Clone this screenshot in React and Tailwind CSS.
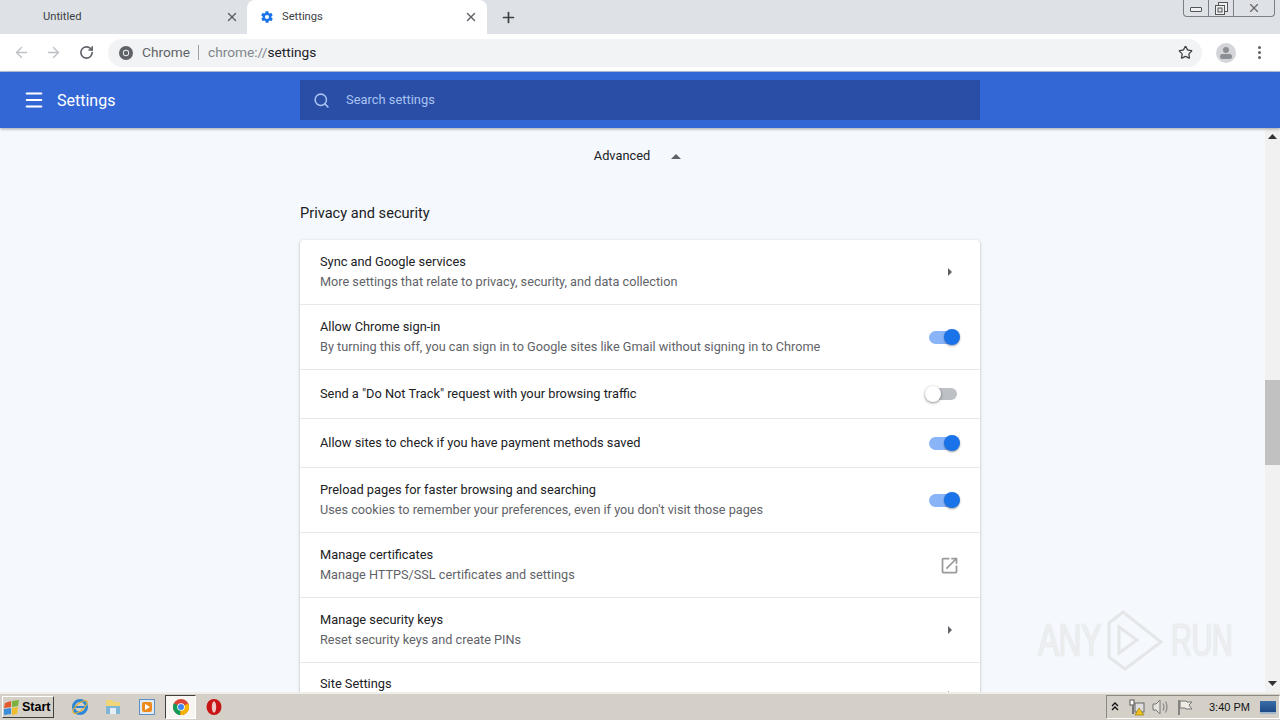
import { ArrowLeft, ArrowRight, RotateCw, Star, Menu, Search, X, Plus } from 'lucide-react';

const rows = [
  { title: 'Sync and Google services', sub: 'More settings that relate to privacy, security, and data collection', end: 'arrow', height: 'h-[64px]' },
  { title: 'Allow Chrome sign-in', sub: 'By turning this off, you can sign in to Google sites like Gmail without signing in to Chrome', end: 'on', height: 'h-[65px]' },
  { title: 'Send a "Do Not Track" request with your browsing traffic', end: 'off', height: 'h-[49px]' },
  { title: 'Allow sites to check if you have payment methods saved', end: 'on', height: 'h-[49px]' },
  { title: 'Preload pages for faster browsing and searching', sub: "Uses cookies to remember your preferences, even if you don't visit those pages", end: 'on', height: 'h-[65px]' },
  { title: 'Manage certificates', sub: 'Manage HTTPS/SSL certificates and settings', end: 'link', height: 'h-[65px]' },
  { title: 'Manage security keys', sub: 'Reset security keys and create PINs', end: 'arrow', height: 'h-[65px]' },
  { title: 'Site Settings', end: 'arrow', height: 'h-[65px]', clipped: true },
];

function Toggle({ on }) {
  if (on) {
    return (
      <div className="relative w-[31px] h-[16px] -mt-px">
        <div className="absolute left-0 top-[2px] w-[29px] h-[13px] rounded-full bg-[#8ab4f8]" />
        <div className="absolute right-0 top-0 w-[16px] h-[16px] rounded-full bg-[#1a73e8] shadow-[0_1px_2px_rgba(0,0,0,0.4)]" />
      </div>
    );
  }
  return (
    <div className="relative w-[32px] h-[16px] mr-[3px]">
      <div className="absolute right-0 top-[2px] w-[30px] h-[12px] rounded-full bg-[#bdc1c6]" />
      <div className="absolute left-0 top-0 w-[16px] h-[16px] rounded-full bg-white shadow-[0_1px_3px_rgba(0,0,0,0.45)]" />
    </div>
  );
}

function RowEnd({ kind }) {
  if (kind === 'arrow') {
    return (
      <svg width="6" height="10" viewBox="0 0 6 10" className="mr-[7px]">
        <path d="M1 1l4 4-4 4z" fill="#5f6368" />
      </svg>
    );
  }
  if (kind === 'link') {
    return (
      <svg width="21" height="21" viewBox="0 0 24 24" fill="#9a9a9a">
        <path d="M19 19H5V5h7V3H5a2 2 0 0 0-2 2v14a2 2 0 0 0 2 2h14c1.1 0 2-.9 2-2v-7h-2v7zM14 3v2h3.59l-9.83 9.83 1.41 1.41L19 6.41V10h2V3h-7z" />
      </svg>
    );
  }
  return <Toggle on={kind === 'on'} />;
}

function Row({ row, first }) {
  return (
    <div className={`${row.height} ${first ? '' : 'border-t border-[#e8e8e8]'} flex items-center justify-between px-[20px] shrink-0`}>
      <div className={`flex flex-col gap-[4px] leading-[16px] ${row.clipped ? 'self-start mt-[13px]' : ''}`}>
        <div className="text-[12.8px] text-[#202124]">{row.title}</div>
        {row.sub && <div className="text-[12.7px] text-[#5f6368]">{row.sub}</div>}
      </div>
      <RowEnd kind={row.end} />
    </div>
  );
}

function ChromeLogo({ size = 14 }) {
  return (
    <svg width={size} height={size} viewBox="0 0 16 16">
      <circle cx="8" cy="8" r="8" fill="#5f6368" />
      <circle cx="8" cy="8" r="3.6" fill="#f1f3f4" />
      <circle cx="8" cy="8" r="2.6" fill="#5f6368" />
    </svg>
  );
}

function TaskbarIcons() {
  return (
    <div className="flex items-center">
      {/* IE */}
      <svg width="18" height="18" viewBox="0 0 18 18" className="ml-[17px]">
        <circle cx="9" cy="9" r="6.5" fill="none" stroke="#2a86d8" strokeWidth="3" />
        <rect x="3" y="8" width="12" height="2" fill="#2a86d8" />
        <ellipse cx="9" cy="9" rx="9" ry="3.5" fill="none" stroke="#e0b030" strokeWidth="1.2" transform="rotate(-40 9 9)" />
      </svg>
      {/* Explorer */}
      <svg width="18" height="18" viewBox="0 0 18 18" className="ml-[15px]">
        <path d="M2 2h6l2 2h6v12H2z" fill="#f1d679" />
        <rect x="2" y="8" width="14" height="8" fill="#7fb5d6" />
        <rect x="6" y="10" width="6" height="6" fill="#e4eef5" />
      </svg>
      {/* Media player */}
      <svg width="16" height="16" viewBox="0 0 16 16" className="ml-[17px]">
        <rect x="0.5" y="0.5" width="15" height="15" fill="#dfeaf5" stroke="#5d8fc0" />
        <rect x="3" y="3" width="10" height="10" rx="2" fill="#ec8a1c" />
        <path d="M6 5l5 3-5 3z" fill="#fff" />
      </svg>
      {/* Chrome, active */}
      <div className="ml-[10px] w-[31px] h-[24px] bg-[#f7f6f3] border border-t-[#404040] border-l-[#404040] border-b-white border-r-white flex items-center justify-center">
        <svg width="16" height="16" viewBox="0 0 16 16">
          <circle cx="8" cy="8" r="8" fill="#db4437" />
          <path d="M8 8L1 4.2A8 8 0 0 0 7.2 16z" fill="#0f9d58" />
          <path d="M8 8l-.8 8A8 8 0 0 0 15.2 4.6z" fill="#f4b400" />
          <circle cx="8" cy="8" r="3.8" fill="#fff" />
          <circle cx="8" cy="8" r="3" fill="#4285f4" />
        </svg>
      </div>
      {/* Opera */}
      <svg width="16" height="18" viewBox="0 0 16 18" className="ml-[10px]">
        <ellipse cx="8" cy="9" rx="7.5" ry="8" fill="#c81414" />
        <ellipse cx="8" cy="9" rx="2.2" ry="5.8" fill="#ecc8c8" />
      </svg>
    </div>
  );
}

function TrayIcons() {
  return (
    <div className="flex items-center">
      <svg width="8" height="10" viewBox="0 0 8 10" className="ml-[4px]">
        <path d="M1 4l3-3 3 3M1 8l3-3 3 3" fill="none" stroke="#111" strokeWidth="1.4" />
      </svg>
      <svg width="16" height="17" viewBox="0 0 16 17" className="ml-[10px]">
        <rect x="1" y="1" width="4" height="5" fill="#fff" stroke="#555" />
        <rect x="3" y="6" width="2" height="9" fill="#777" />
        <rect x="6" y="4" width="9" height="9" fill="#ddd" stroke="#666" />
        <path d="M10 9l5 7H6z" fill="#eec21a" stroke="#8a6d00" strokeWidth="0.6" />
      </svg>
      <svg width="17" height="16" viewBox="0 0 17 16" className="ml-[7px]">
        <path d="M1 5h3l4-4v14l-4-4H1z" fill="#e6e3dc" stroke="#777" />
        <path d="M11 4.5q2 3.5 0 7M13.5 2.5q3 5.5 0 11" fill="none" stroke="#888" strokeWidth="1.2" />
      </svg>
      <svg width="16" height="17" viewBox="0 0 16 17" className="ml-[8px]">
        <path d="M2 1v15" stroke="#666" strokeWidth="1.4" />
        <path d="M3 2h6l1 1h5l-3 3 3 4H9l-1-1H3z" fill="#eeebe4" stroke="#777" />
      </svg>
    </div>
  );
}

export default function App() {
  return (
    <div className="relative w-[1280px] h-[720px] overflow-hidden flex flex-col bg-white text-[#202124] font-['Roboto','Liberation_Sans',sans-serif]">
      {/* Tab strip */}
      <div className="h-[34px] bg-[#dee1e6] flex shrink-0 text-[11.2px]">
        <div className="w-[247px] flex items-center pl-[43px] pr-[8px] justify-between text-[#3c4043]">
          <span>Untitled</span>
          <X size={14} strokeWidth={2.4} className="text-[#5f6368]" />
        </div>
        <div className="w-[240px] bg-white rounded-t-[8px] flex items-center pl-[13px] pr-[9px] text-[#3c4043]">
          <svg width="14" height="14" viewBox="0 0 24 24" fill="#1a73e8">
            <path d="M19.4 13c.1-.3.1-.7.1-1s0-.7-.1-1l2.1-1.6c.2-.2.2-.4.1-.6l-2-3.5c-.1-.2-.4-.3-.6-.2l-2.5 1c-.5-.4-1.1-.7-1.7-1l-.4-2.6c0-.3-.2-.4-.5-.4h-4c-.3 0-.5.2-.5.4l-.4 2.6c-.6.3-1.2.6-1.7 1l-2.5-1c-.2-.1-.5 0-.6.2l-2 3.5c-.1.2-.1.5.1.6L4.6 11c-.1.3-.1.7-.1 1s0 .7.1 1l-2.1 1.6c-.2.2-.2.4-.1.6l2 3.5c.1.2.4.3.6.2l2.5-1c.5.4 1.1.7 1.7 1l.4 2.6c0 .3.2.4.5.4h4c.3 0 .5-.2.5-.4l.4-2.6c.6-.3 1.2-.6 1.7-1l2.5 1c.2.1.5 0 .6-.2l2-3.5c.1-.2.1-.5-.1-.6zM12 15.5a3.5 3.5 0 1 1 0-7 3.5 3.5 0 0 1 0 7z" />
          </svg>
          <span className="ml-[8px]">Settings</span>
          <X size={14} strokeWidth={2.4} className="ml-auto text-[#5f6368]" />
        </div>
        <div className="ml-[13px] flex items-center">
          <Plus size={17} strokeWidth={2.4} className="text-[#3c4043]" />
        </div>
        {/* Window controls */}
        <div className="ml-auto mr-[5px] h-[17px] w-[92px] flex border border-t-0 border-[#7b7f87] rounded-b-[4px]">
          <div className="w-[25px] border-r border-[#7b7f87] flex items-center justify-center">
            <div className="w-[12px] h-[5px] mt-[2px] border border-[#555] rounded-[1px] bg-[#eef0f2]" />
          </div>
          <div className="w-[25px] border-r border-[#7b7f87] flex items-center justify-center">
            <svg width="13" height="13" viewBox="0 0 13 13">
              <rect x="3.5" y="0.5" width="9" height="9" fill="#eef0f2" stroke="#555" />
              <rect x="0.5" y="3.5" width="9" height="9" fill="#eef0f2" stroke="#555" />
              <rect x="3" y="6" width="4" height="4" fill="#dee1e6" stroke="#555" />
            </svg>
          </div>
          <div className="flex-1 flex items-center justify-center">
            <X size={14} strokeWidth={2} className="text-[#666]" />
          </div>
        </div>
      </div>

      {/* Toolbar */}
      <div className="h-[38px] bg-white flex items-center shrink-0 border-b border-[#b8c4dc]">
        <ArrowLeft size={17} strokeWidth={2} className="ml-[13px] text-[#bdc1c6]" />
        <ArrowRight size={17} strokeWidth={2} className="ml-[15px] text-[#bdc1c6]" />
        <RotateCw size={15} strokeWidth={2.6} className="ml-[17px] text-[#5f6368]" />
        <div className="ml-[14px] w-[1094px] h-[28px] rounded-full bg-[#f1f3f4] flex items-center pl-[11px] pr-[9px] text-[13.7px]">
          <ChromeLogo />
          <span className="ml-[9px] text-[#5f6368]">Chrome</span>
          <span className="ml-[8px] w-px h-[15px] bg-[#9aa0a6]" />
          <span className="ml-[9px] text-[#80868b]">
            chrome://<span className="text-[#202124]">settings</span>
          </span>
          <Star size={15} strokeWidth={2} className="ml-auto text-[#3c4043]" />
        </div>
        <div className="ml-[14px] w-[20px] h-[20px] rounded-full bg-[#d3d5d8] flex flex-col items-center justify-center overflow-hidden">
          <div className="w-[6px] h-[6px] rounded-full bg-[#8b8e92]" />
          <div className="mt-px w-[12px] h-[5px] rounded-full bg-[#8b8e92]" />
        </div>
        <div className="ml-[22px] flex flex-col gap-[2px]">
          <div className="w-[3px] h-[3px] rounded-full bg-[#5f6368]" />
          <div className="w-[3px] h-[3px] rounded-full bg-[#5f6368]" />
          <div className="w-[3px] h-[3px] rounded-full bg-[#5f6368]" />
        </div>
      </div>

      {/* Settings header */}
      <div className="h-[56px] bg-[#3367d6] flex items-center shrink-0 shadow-[0_1px_3px_rgba(0,0,0,0.35)] z-10">
        <Menu size={22} strokeWidth={2.2} className="ml-[23px] text-white" />
        <span className="ml-[12px] w-[243px] pt-[2px] text-[16px] text-white">Settings</span>
        <div className="w-[680px] h-[40px] bg-[#2a4ea6] flex items-center pl-[13px] text-[12.9px] text-[#a9c3f2]">
          <Search size={17} strokeWidth={2.2} className="text-[#a9c3f2]" />
          <span className="ml-[16px]">Search settings</span>
        </div>
      </div>

      {/* Page content and scrollbar */}
      <div className="flex-1 min-h-0 flex">
        <div className="flex-1 min-w-0 bg-[#f5f9fd] overflow-hidden pl-[300px] pr-[285px]">
          <div className="h-[55px] flex items-center justify-center pt-[1px] pr-[5px] text-[12.8px] text-[#202124]">
            <span>Advanced</span>
            <svg width="10" height="5" viewBox="0 0 10 5" className="ml-[21px]">
              <path d="M0 5l5-5 5 5z" fill="#5f6368" />
            </svg>
          </div>
          <div className="h-[57px] pt-[21px] text-[14.6px] leading-[18px] text-[#202124]">Privacy and security</div>
          <div className="w-[680px] bg-white rounded-[4px] shadow-[0_1px_2px_rgba(60,64,67,0.3),0_1px_3px_1px_rgba(60,64,67,0.1)] flex flex-col">
            {rows.map((row, i) => (
              <Row key={row.title} row={row} first={i === 0} />
            ))}
          </div>
        </div>
        <div className="w-[15px] bg-[#f1f1f1] flex flex-col items-center justify-between relative">
          <svg width="9" height="5" viewBox="0 0 9 5" className="mt-[6px]"><path d="M0 5l4.5-5 4.5 5z" fill="#333" /></svg>
          <div className="absolute left-0 top-[252px] w-[15px] h-[85px] bg-[#c1c1c1]" />
          <svg width="9" height="5" viewBox="0 0 9 5" className="mb-[6px]"><path d="M0 0l4.5 5 4.5-5z" fill="#333" /></svg>
        </div>
      </div>

      {/* Watermark */}
      <div className="absolute left-[1038px] top-[608px] h-[64px] flex items-center gap-[3px] pointer-events-none text-[47px] font-['Liberation_Sans',sans-serif] tracking-[-1px] text-[#eceef0] [text-shadow:0_0_2px_#d8dadc]">
        <span className="scale-x-[0.676] origin-left w-[62px]">ANY</span>
        <svg width="62" height="62" viewBox="0 0 58 62" className="shrink-0">
          <path d="M4 14l0 34 16 12 36-27L18 3z" fill="none" stroke="#e4e6e8" strokeWidth="3" />
          <path d="M14 18l0 26 18-13z" fill="none" stroke="#e4e6e8" strokeWidth="3" />
        </svg>
        <span className="ml-[3px] scale-x-[0.62] origin-left w-[60px]">RUN</span>
      </div>

      {/* Taskbar */}
      <div className="h-[28px] bg-[#d4d0c8] border-t-2 border-[#f0eee8] flex items-center shrink-0">
        <div className="ml-[2px] w-[52px] h-[22px] bg-[#d4d0c8] border border-t-white border-l-white border-b-[#404040] border-r-[#404040] flex items-center pl-[1px] gap-[2px] text-[12.5px] font-bold text-black font-['Liberation_Sans',sans-serif]">
          <svg width="16" height="15" viewBox="0 0 16 15">
            <path d="M1 3l6-2v6l-7 1z" fill="#e2572b" />
            <path d="M8 1l7-1-1 6-6 1z" fill="#7cb13b" />
            <path d="M0 9l7-1v6l-7 1z" fill="#3a8fd8" />
            <path d="M8 8l6-1-1 7-5 1z" fill="#f0bd2c" />
          </svg>
          <span>Start</span>
        </div>
        <TaskbarIcons />
        <div className="ml-auto w-[174px] h-[24px] border border-t-[#8a8a84] border-l-[#8a8a84] border-b-white border-r-white flex items-center">
          <TrayIcons />
          <span className="ml-[16px] text-[11px] text-[#111] font-['Liberation_Sans',sans-serif]">3:40 PM</span>
          <div className="ml-auto mr-[3px] w-[16px] h-[13px] bg-gradient-to-b from-[#3a6ea8] to-[#1e4a86] border-b-2 border-[#9fb6cc]" />
        </div>
      </div>
    </div>
  );
}
